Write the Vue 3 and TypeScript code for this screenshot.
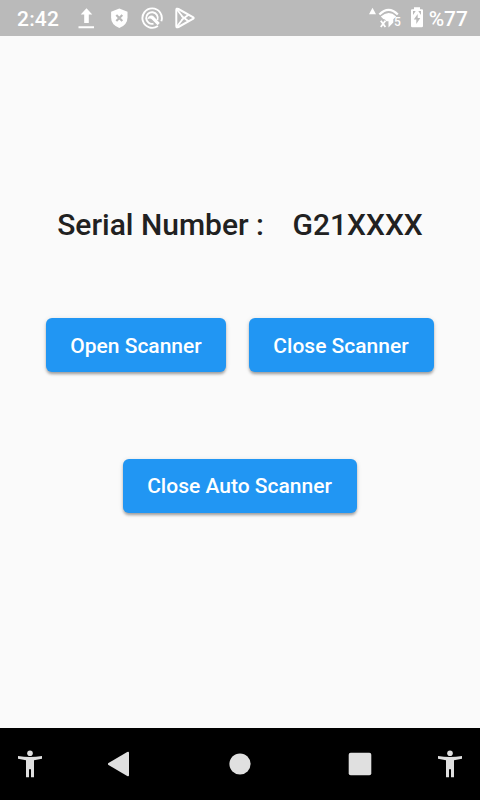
<script setup lang="ts">
interface ScannerAction {
  label: string
  size: string
}

const time = '2:42'
const battery = '%77'
const serialNumber = 'G21XXXX'
const scannerActions: ScannerAction[] = [
  { label: 'Open Scanner', size: 'open' },
  { label: 'Close Scanner', size: 'close' },
]
</script>

<template>
  <div class="screen">
    <header class="status">
      <span class="time">{{ time }}</span>
      <div class="notifications">
        <svg width="18" height="24" viewBox="0 0 18 24">
          <path d="M9.5 2.3 15.3 8.5H11.8V17H7.2V8.5H3.7ZM1.5 20.3H17V22.3H1.5Z" />
        </svg>
        <svg width="18" height="24" viewBox="0 0 18 24">
          <path d="M9.3 2.5 17.5 5.7V11.5Q17.5 18.8 9.3 22Q1.1 18.8 1.1 11.5V5.7Z" />
          <path class="cut" d="M6.3 9 12.3 15M12.3 9 6.3 15" />
        </svg>
        <svg width="22" height="24" viewBox="0 0 22 24">
          <path class="line ring" d="M20.3 15.3A9.7 9.7 0 1 0 16.9 19.9" />
          <path class="line ring" d="M16.4 14A5.8 5.8 0 1 0 12.5 17.6" />
          <path d="M6.2 13.5Q7.5 9.4 10.5 9.6Q12 9.6 13.2 10.9L18.8 17 16.6 19.2 11 13.4Q9.2 11.8 6.2 13.5Z" />
        </svg>
        <svg width="22" height="24" viewBox="0 0 22 24">
          <path class="line outline" d="M2.3 4.1Q2.3 1.9 4.4 3L18.9 11Q20.5 12 18.9 13L4.4 21Q2.3 22.1 2.3 19.9Z" />
          <path class="line thin" d="M3 3.5 9.5 12 3 20.5M7.5 10 14.5 15.2M7.5 14 14.5 8.8" />
        </svg>
      </div>
      <div class="system">
        <svg width="33" height="24" viewBox="0 0 33 24">
          <path d="M4.5 1.7 8 8.3H1Z" />
          <path class="line" d="M11.4 8.5Q20.6 -.8 29.8 8.5" />
          <path d="M12.8 10.6Q20.5 3.6 28.2 10.4L25.3 13.3V16.5L20.5 21.5V15.3H18.2L17 13.6Q14.8 13.2 12.8 10.6Z" />
          <path class="line thin" d="M12.8 14.8 17.4 21M17.4 14.8 12.8 21" />
          <text class="network" x="26" y="19.8">5</text>
        </svg>
        <svg class="cell" width="12" height="24" viewBox="0 0 12 24">
          <path d="M3 1.3H9V3.3H11Q12 3.3 12 4.3V20Q12 21.3 10.7 21.3H1.3Q0 21.3 0 20V4.3Q0 3.3 1 3.3H3Z" />
          <path class="bolt" d="M6.7 8 2.8 13.4H5.3V18L9.3 12H6.7Z" />
          <path class="bolt" d="M2 5H4.7L2 9ZM7.3 5H10V9Z" />
        </svg>
        <span class="percent">{{ battery }}</span>
      </div>
    </header>

    <main class="content">
      <h1 class="serial">
        <span>Serial Number :</span>
        <span>{{ serialNumber }}</span>
      </h1>
      <div class="pair">
        <button v-for="action in scannerActions" :key="action.label" class="btn" :class="action.size">{{ action.label }}</button>
      </div>
      <button class="btn auto">Close Auto Scanner</button>
    </main>

    <nav class="navbar">
      <svg width="24" height="30" viewBox="0 0 24 30">
        <circle cx="12" cy="4.3" r="2.8" />
        <path d="M0 7Q12 9.2 24 7V9.8L16 11.2V28.3H13V20.2H11V28.3H8V11.2L0 9.8Z" />
      </svg>
      <div class="keys">
        <svg width="24" height="26" viewBox="0 0 24 26">
          <path d="M.5 12 19.2 1.1Q21 .2 21 2V24Q21 25.8 19.2 24.9L.5 14Q-.8 13 .5 12Z" />
        </svg>
        <svg width="24" height="24" viewBox="0 0 24 24"><circle cx="12" cy="12" r="10.6" /></svg>
        <svg width="24" height="24" viewBox="0 0 24 24"><rect x=".7" y=".7" width="22.6" height="22.6" rx="2" /></svg>
      </div>
      <svg width="24" height="30" viewBox="0 0 24 30">
        <circle cx="12" cy="4.3" r="2.8" />
        <path d="M0 7Q12 9.2 24 7V9.8L16 11.2V28.3H13V20.2H11V28.3H8V11.2L0 9.8Z" />
      </svg>
    </nav>
  </div>
</template>

<style>
body {
  margin: 0;
}
</style>

<style scoped>
.screen {
  width: 480px;
  height: 800px;
  display: flex;
  flex-direction: column;
  overflow: hidden;
  background: #fafafa;
  font-family: Roboto, "Liberation Sans", sans-serif;
  font-weight: 500;
}

svg {
  display: block;
  flex: none;
}

.status {
  height: 36px;
  box-sizing: border-box;
  display: flex;
  align-items: center;
  padding: 0 12px 0 17px;
  background: #bababa;
  color: #fff;
  font-size: 21px;
  line-height: 36px;
  fill: #fff;
}

.time {
  width: 60px;
  padding-top: 2px;
  letter-spacing: .2px;
}

.notifications {
  display: flex;
  gap: 13px;
}

.notifications svg:first-child {
  margin-right: 2px;
}

.notifications svg:nth-child(3) {
  margin-right: -2px;
}

.system {
  display: flex;
  align-items: center;
  margin-left: auto;
}

.cell {
  margin: 0 6px 0 10px;
}

.percent {
  padding-top: 2px;
}

.line {
  fill: none;
  stroke: #fff;
  stroke-width: 2.3;
}

.ring {
  stroke-width: 1.9;
}

.outline {
  stroke-width: 2;
}

.thin {
  stroke-width: 1.8;
}

.cut {
  fill: none;
  stroke: #bababa;
  stroke-width: 2.2;
}

.bolt {
  fill: #bababa;
}

.network {
  font-size: 12px;
}

.content {
  flex: 1;
  display: flex;
  flex-direction: column;
  align-items: center;
}

.serial {
  display: flex;
  gap: 28.6px;
  margin: 171px 0 0;
  color: #212121;
  font-size: 30px;
  font-weight: 500;
  line-height: 36px;
  white-space: nowrap;
}

.pair {
  display: flex;
  gap: 23px;
  margin: 75px 0 87px;
}

.btn {
  height: 54px;
  box-sizing: border-box;
  padding: 0;
  border: 0;
  border-radius: 6px;
  background: #2196f3;
  box-shadow: 0 3px 3px -1.5px rgba(0, 0, 0, .2), 0 2px 3px rgba(0, 0, 0, .14), 0 1px 5px rgba(0, 0, 0, .12);
  color: #fff;
  font: 500 21px/54px Roboto, "Liberation Sans", sans-serif;
  white-space: nowrap;
}

.pair .btn {
  padding-top: 2px;
  line-height: 52px;
}

.open {
  width: 180px;
}

.close {
  width: 185px;
  padding-right: 1px;
}

.auto {
  width: 234px;
  padding-right: 1px;
}

.navbar {
  height: 72px;
  box-sizing: border-box;
  display: flex;
  align-items: center;
  justify-content: space-between;
  padding: 0 18px;
  background: #000;
  fill: #e0e0e0;
}

.keys {
  display: flex;
  align-items: center;
  gap: 96px;
}
</style>
